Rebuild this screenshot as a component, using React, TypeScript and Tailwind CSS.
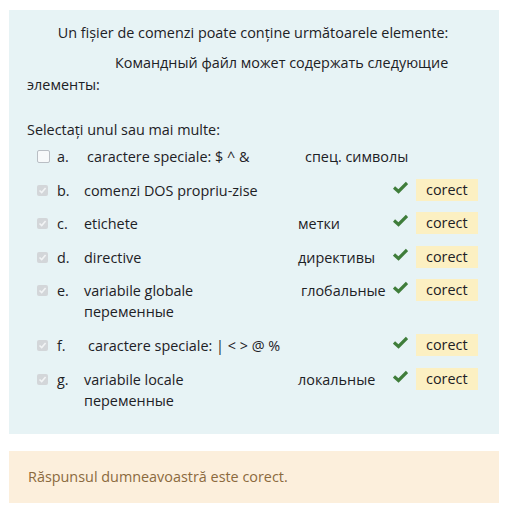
import React from 'react';

type Opt = {
  letter: string;
  text: string;
  ru: string;
  ruWrap?: boolean;
  checked: boolean;
  pad?: string;
  ruPad?: string;
};

const options: Opt[] = [
  { letter: 'a.', text: 'caractere speciale: $ ^ &', ru: 'спец. символы', checked: false, pad: 'pl-[3px]', ruPad: 'pl-[7px]' },
  { letter: 'b.', text: 'comenzi DOS propriu-zise', ru: '', checked: true },
  { letter: 'c.', text: 'etichete', ru: 'метки', checked: true },
  { letter: 'd.', text: 'directive', ru: 'директивы', checked: true },
  { letter: 'e.', text: 'variabile globale', ru: 'глобальные', ruWrap: true, checked: true, ruPad: 'pl-[3px]' },
  { letter: 'f.', text: 'caractere speciale: | < > @ %', ru: '', checked: true, pad: 'pl-[4px]' },
  { letter: 'g.', text: 'variabile locale', ru: 'локальные', ruWrap: true, checked: true },
];

function Check(): JSX.Element {
  return (
    <svg width="15" height="13" viewBox="0 0 15 13" className="text-[#3f7d3a]">
      <path d="M1 6.5 L5.5 10.5 L14 2" stroke="currentColor" strokeWidth="3.2" fill="none" strokeLinejoin="miter" />
    </svg>
  );
}

function Box({ checked }: { checked: boolean }): JSX.Element {
  if (!checked) {
    return <span className="block w-[13px] h-[13px] rounded-[2px] border border-[#b9bec4] bg-[#f7f9fa]" />;
  }
  return (
    <span className="flex items-center justify-center w-[11px] h-[11px] rounded-[2px] bg-[#d3d6d9]">
      <svg width="9" height="9" viewBox="0 0 9 9">
        <path d="M1.5 4.5 L3.7 6.6 L7.6 2" stroke="#f2f4f5" strokeWidth="1.6" fill="none" />
      </svg>
    </span>
  );
}

export default function App(): JSX.Element {
  return (
    <div className="w-[508px] h-[516px] bg-white pt-[10px] px-[9px] text-[#1d2125] text-[14.4px] leading-[21px]" style={{ fontFamily: '"Open Sans", "Noto Sans", sans-serif' }}>
      <div className="bg-[#e7f3f5] pl-[18px] pr-[20px] pt-[12px] pb-[11px]">
        <p className="text-center">Un fișier de comenzi poate conține următoarele elemente:</p>
        <p className="mt-[9px] pr-[6px] leading-[22px]">
          <span className="inline-block w-[88px]" />Командный файл может содержать следующие элементы:
        </p>
        <p className="mt-[23px]">Selectați unul sau mai multe:</p>
        <div className="mt-[6px] flex flex-col">
          {options.map((o) => (
            <div key={o.letter} className="flex items-start pb-[12.6px] whitespace-nowrap">
              <div className="w-[10px]" />
              <div className="w-[20px] h-[21px] flex items-center">
                <Box checked={o.checked} />
              </div>
              <div className="w-[27px]">{o.letter}</div>
              <div className="w-[214px]">
                <div className={o.pad}>{o.text}</div>
                {o.ruWrap && <div>переменные</div>}
              </div>
              <div className={`w-[95px] ${o.ruPad ?? ''}`}>{o.ru}</div>
              {o.checked ? (
                <div className="flex items-start gap-[7px]">
                  <div className="w-[16px] pt-[1px]">
                    <Check />
                  </div>
                  <span className="bg-[#fcf0c2] px-[10px] h-[22px] leading-[22px] -mt-[1px]">corect</span>
                </div>
              ) : null}
            </div>
          ))}
        </div>
      </div>
      <div className="mt-[17px] bg-[#fcefdc] text-[#8b6a3e] pl-[19px] py-[15px] leading-[22px]">
        Răspunsul dumneavoastră este corect.
      </div>
    </div>
  );
}
